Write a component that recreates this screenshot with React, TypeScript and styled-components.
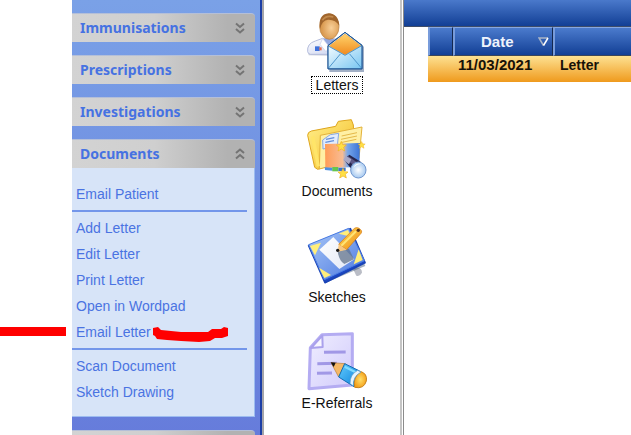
import React from "react";
import styled, { createGlobalStyle } from "styled-components";

const GlobalStyle = createGlobalStyle`
  * { box-sizing: border-box; }
  body {
    margin: 0;
    background: #fff;
    font-family: "Liberation Sans", Arial, sans-serif;
    font-size: 14px;
  }
  button { font: inherit; border: 0; background: none; padding: 0; cursor: pointer; }
`;

const Page = styled.div`
  display: grid;
  grid-template-columns: 72px 192px 140px minmax(0, 1fr);
  height: 100vh;
  overflow: hidden;
`;

const Gutter = styled.div``;

const Sidebar = styled.nav`
  display: flex;
  flex-direction: column;
  gap: 13px;
  min-height: 0;
  padding: 13px 6px 0 0;
  background: linear-gradient(#7aa1e7, #667cdb);
  border-right: 2px solid #a5a5a9;
  box-shadow: inset -2px 0 0 #1d3fa6;
`;

const Section = styled.section`
  flex: none;
  margin-right: 1px;
`;

const SectionHeader = styled.button`
  display: flex;
  align-items: center;
  justify-content: space-between;
  width: 100%;
  height: 29px;
  padding: 0 10px 0 8px;
  border-top: 1px solid #b4bfd8;
  border-radius: 0 4px 0 0;
  background: linear-gradient(90deg, #d3d3d3, #cfcfcf 45%, #b2b2b2 85%);
  color: #4672e2;
  font-family: "Noto Sans", sans-serif;
  font-size: 14px;
  font-weight: 700;
  line-height: 28px;
`;

const NextHeader = styled.div`
  flex: none;
  height: 29px;
  margin-right: 1px;
  border-top: 1px solid #b4bfd8;
  border-radius: 0 4px 0 0;
  background: linear-gradient(90deg, #d3d3d3, #cfcfcf 45%, #b2b2b2 85%);
`;

const Panel = styled.div`
  padding: 13px 0 11px;
  background: #d7e4f8;
  border-right: 1px solid #9dbcf0;
  border-bottom: 1px solid #9dbcf0;
`;

const PanelItem = styled.div`
  position: relative;
  display: flex;
  align-items: center;
  height: 26px;
  padding-left: 4px;
`;

const PanelLink = styled.a`
  color: #4a73e2;
  line-height: 26px;
  text-decoration: none;
`;

const Separator = styled.hr`
  height: 2px;
  margin: 3px 7px 3px 0;
  border: 0;
  background: #7396ea;
`;

const ArrowMark = styled.svg`
  position: absolute;
  left: -72px;
  top: 8px;
`;

const Underline = styled.svg`
  position: absolute;
  left: 81px;
  top: 8px;
`;

const IconBar = styled.div`
  display: flex;
  flex-direction: column;
  align-items: center;
  gap: 25px;
  padding: 13px 0 0 7px;
  border-right: 1px solid #8b8b8b;
  box-shadow: inset -1px 0 0 #fff, inset -3px 0 0 #c5c5c5;
`;

const IconButton = styled.button`
  display: flex;
  flex-direction: column;
  align-items: center;
  gap: 3px;
  color: #111;
`;

const IconLabel = styled.span<{ $focused?: boolean }>`
  height: 18px;
  padding: 0 4px;
  border: 1px dotted ${(p) => (p.$focused ? "#000" : "transparent")};
  line-height: 16px;
`;

const Content = styled.main`
  min-width: 0;
`;

const TitleBar = styled.div`
  height: 27px;
  background: linear-gradient(#4a79cb, #123f95);
  border-bottom: 1px solid #3f4d68;
`;

const TableWrap = styled.div`
  padding-left: 24px;
`;

const Table = styled.table`
  width: 100%;
  table-layout: fixed;
  border-collapse: separate;
  border-spacing: 0;
`;

const HeadCell = styled.th<{ $width?: number }>`
  width: ${(p) => (p.$width ? `${p.$width}px` : "auto")};
  height: 29px;
  padding: 0;
  border-top: 1px solid #87a8e2;
  border-left: 2px solid #789cdb;
  border-right: 1px solid #14284f;
  border-bottom: 1px solid #3c4658;
  background: linear-gradient(#4b7bcd, #123f95);
  color: #eef3fc;

  &:last-child { border-right: 0; }
`;

const SortButton = styled.button`
  display: flex;
  align-items: center;
  justify-content: space-between;
  width: 100%;
  padding: 0 3px 0 26px;
  color: inherit;
  font-size: 15px;
  font-weight: 700;
  line-height: 26px;
`;

const Row = styled.tr`
  background: linear-gradient(#fde192, #ef9a1d);
`;

const Cell = styled.td<{ $inset?: number; $size?: number }>`
  height: 26px;
  padding: 0 0 0 ${(p) => p.$inset ?? 0}px;
  color: #181208;
  font-size: ${(p) => p.$size ?? 14}px;
  font-weight: 700;
  line-height: 18px;
  vertical-align: top;
`;

function Chevrons({ up }: { up?: boolean }) {
  const d = up ? "M1 5 5 1.5 9 5M1 10.500 5 7 9 10.500" : "M1 1.500 5 5 9 1.500M1 7 5 10.500 9 7";
  return (
    <svg width="10" height="12" viewBox="0 0 10 12" fill="none" stroke="#747474" strokeWidth="2">
      <path d={d} />
    </svg>
  );
}

function LettersIcon() {
  return (
    <svg width="60" height="60" viewBox="51 24 180 180">
      <defs>
        <radialGradient id="face" cx=".6" cy=".55"><stop stopColor="#f8cf98" /><stop offset="1" stopColor="#d9994f" /></radialGradient>
        <linearGradient id="flap" x2="0" y2="1"><stop stopColor="#ffd36b" /><stop offset="1" stopColor="#f08a1e" /></linearGradient>
        <linearGradient id="mail" x2="1" y2="1"><stop stopColor="#f2fbff" /><stop offset="1" stopColor="#79c6f2" /></linearGradient>
        <linearGradient id="coat" x2="1" y2="1"><stop stopColor="#fff" /><stop offset="1" stopColor="#c6cfee" /></linearGradient>
      </defs>
      <path d="M54 148Q48 118 78 108L98 101 142 103 160 120V150Z" fill="#8995ac" opacity=".45" transform="translate(2 3)" />
      <path d="M53 140Q50 116 76 108L98 100 140 102Q160 108 164 145L112 148H62Q54 147 53 140Z" fill="url(#coat)" stroke="#b4bcdc" strokeWidth="3" />
      <path d="M100 101 120 134 139 103Z" fill="#93a8df" />
      <path d="m98 101-8 17 18 22 11-14ZM138 103l8 16-16 15-7-8Z" fill="#fff" stroke="#c1caea" strokeWidth="2" />
      <path d="M75 124h14v14H75z" fill="#3e70da" /><path d="M88 127h7v9h-7z" fill="#e36c4d" />
      <ellipse cx="118" cy="65" rx="29" ry="38" fill="url(#face)" stroke="#b47a3c" strokeWidth="2" />
      <path d="M90 72Q83 28 116 25Q145 26 148 62Q137 43 114 44Q96 45 90 72Z" fill="#a0652c" />
      <path d="M97 46Q108 30 130 36" fill="none" stroke="#c28a4c" strokeWidth="5" />
      <path d="M116 124 166 87 220 122V198H116Z" fill="#46618d" opacity=".5" transform="translate(2 3)" />
      <path d="M114 122 165 82 216 121V191H114Z" fill="url(#mail)" stroke="#285e9d" strokeWidth="3" />
      <path d="M118 123 165 87 212 122 165 150Z" fill="url(#flap)" stroke="#f5a23d" strokeWidth="2" />
      <path d="M115 124 165 151 215 123V190H115Z" fill="url(#mail)" />
      <path d="M115 190 151 147M215 190 179 147M115 123 165 151 215 122" fill="none" stroke="#4f96cc" strokeWidth="3" />
      <path d="M114 122 165 82 216 121V192H114Z" fill="none" stroke="#225996" strokeWidth="3" strokeLinejoin="round" />
    </svg>
  );
}

const STAR = "m0-15 4 10 11 1-8 7 3 11-10-6-10 6 3-11-8-7 11-1Z";

function DocumentsIcon() {
  return (
    <svg width="60" height="60" viewBox="51 27 180 180">
      <defs>
        <linearGradient id="fold" x2="1" y2="1"><stop stopColor="#fff08e" /><stop offset="1" stopColor="#f4b91e" /></linearGradient>
        <linearGradient id="pic" x2="1"><stop stopColor="#ff9c56" /><stop offset=".5" stopColor="#f8bc94" /><stop offset=".65" stopColor="#76a6ea" /><stop offset="1" stopColor="#3c73d5" /></linearGradient>
        <radialGradient id="lens"><stop stopColor="#fff" /><stop offset="1" stopColor="#a6c9f0" /></radialGradient>
      </defs>
      <path d="M53 76Q53 66 64 63L137 49 145 34 184 29 190 45 194 145 83 178 74 172Z" fill="url(#fold)" stroke="#dea51d" strokeWidth="3" />
      <path d="M91 76 216 51 207 145 88 177Z" fill="#fff0a5" stroke="#e4b23a" strokeWidth="3" />
      <path d="m98 90 23-16 25-4-4 37-43 10Z" fill="#e2ecfd" stroke="#87a8e2" strokeWidth="3" />
      <path d="m108 88 25-5M106 97l26-5" stroke="#618edb" strokeWidth="4" />
      <path d="m155 78 46-10M153 88l48-10M152 98l47-10" stroke="#e5b94a" strokeWidth="3" />
      <path d="M68 79 85 169" stroke="#ffe569" strokeWidth="10" />
      <path d="M105 102 210 99 208 171 106 174Z" fill="url(#pic)" />
      <path d="m104 172 24 1v9l-23-2Z" fill="#4b90e2" /><path d="M127 171h18v13h-18z" fill="#68c54c" /><path d="M145 173h22v10h-22z" fill="#4076c8" />
      <path d="m162 149 16-15 35 22-20 32Z" fill="#27264d" />
      <path d="m173 137 32 23-7 11-31-24Z" fill="#5c5786" />
      <path d="m160 150 7-13 17 11-7 15Z" fill="#aaa8c6" />
      <ellipse cx="205" cy="180" rx="23" ry="24" fill="url(#lens)" stroke="#7197cf" strokeWidth="3" />
      <path d="M190 173q9-17 25-11-16 1-25 11Z" fill="#fff" />
      <g fill="#ffe045" stroke="#efb120" strokeWidth="2">
        <path d={STAR} transform="translate(154 109)" />
        <path d={STAR} transform="translate(159 190)" />
        <path d={STAR} transform="translate(215 105) scale(.7)" />
      </g>
    </svg>
  );
}

function SketchesIcon() {
  return (
    <svg width="60" height="60" viewBox="51 30 180 180">
      <defs>
        <linearGradient id="board" x2="1" y2="1"><stop stopColor="#a9c8f8" /><stop offset="1" stopColor="#4b78df" /></linearGradient>
        <linearGradient id="pencil" x2="1" y2="1"><stop stopColor="#ffdc55" /><stop offset="1" stopColor="#ed8916" /></linearGradient>
        <linearGradient id="paper" x2="1" y2="1"><stop stopColor="#fff" /><stop offset="1" stopColor="#e2e8f6" /></linearGradient>
      </defs>
      <path d="M188 160q28-7 28 13-8 14-17 9Z" fill="#9ca1ae" opacity=".7" />
      <path d="M58 99 105 198 224 148 180 46Z" fill="#385276" opacity=".45" transform="translate(2 5)" />
      <path d="M56 92 181 41 225 143 105 203Z" fill="#1c48c5" stroke="#1a43b5" strokeWidth="5" strokeLinejoin="round" />
      <path d="M56 89 176 40 223 137 103 194Z" fill="url(#board)" stroke="#4b7de4" strokeWidth="3" />
      <path d="m60 93 33-10-18 38ZM146 56l28-11 9 20ZM206 103l12 32-27 13ZM87 158l36 22-20 9Z" fill="#ffee7b" />
      <path d="m88 104 42-38 63 67-45 29Z" fill="url(#paper)" />
      <path d="m143 109 34-8 15 32-29 14q-16-9-20-38Z" fill="#61738b" opacity=".75" />
      <path d="m146 88 47-48q12-7 22 8l-1 6-44 50Z" fill="url(#pencil)" stroke="#d47a12" strokeWidth="2" />
      <path d="m154 92 44-43" stroke="#ffe476" strokeWidth="6" />
      <path d="m146 88 24 16-27 6Z" fill="#f9c77f" />
      <circle cx="143" cy="106" r="5" fill="#17171a" /><circle cx="205" cy="46" r="5" fill="#55331e" />
    </svg>
  );
}

function ReferralsIcon() {
  return (
    <svg width="60" height="60" viewBox="51 33 180 180">
      <defs>
        <linearGradient id="sheet" x2="1" y2="1"><stop stopColor="#f0eeff" /><stop offset="1" stopColor="#d1cbfb" /></linearGradient>
        <linearGradient id="blue" x2="1" y2="1"><stop stopColor="#64ccff" /><stop offset="1" stopColor="#087fd9" /></linearGradient>
        <radialGradient id="end"><stop stopColor="#ffdf6b" /><stop offset="1" stopColor="#f4a21b" /></radialGradient>
      </defs>
      <path d="M96 44 187 41V195L57 206 61 83Z" fill="url(#sheet)" stroke="#b4acf2" strokeWidth="9" strokeLinejoin="round" />
      <path d="m63 84 34-37 1 34Z" fill="#f8f6ff" stroke="#aaa1ec" strokeWidth="6" strokeLinejoin="round" />
      <path d="m102 97 65-1M82 131l59-1M81 160l45-1" stroke="#a198e6" strokeWidth="9" />
      <path d="m123 128 43 3-20 40Z" fill="#f5b867" stroke="#b97c31" strokeWidth="2" />
      <path d="m122 127 15 1-6 13Z" fill="#111" />
      <path d="m164 131 45 22-17 47-46-29Z" fill="url(#blue)" stroke="#116db3" strokeWidth="3" />
      <path d="m164 140 39 20" stroke="#80dcff" strokeWidth="7" />
      <path d="M211 154q22 7 18 29-7 25-35 19-7-27 17-48Z" fill="url(#end)" stroke="#c68320" strokeWidth="3" />
      <path d="M203 151q-24 13-23 40l10 7q-2-28 23-42Z" fill="#e8f4fd" stroke="#4c94c6" strokeWidth="2" />
    </svg>
  );
}

const closedSections = ["Immunisations", "Prescriptions", "Investigations"];

const launchers = [
  { label: "Letters", Icon: LettersIcon },
  { label: "Documents", Icon: DocumentsIcon },
  { label: "Sketches", Icon: SketchesIcon },
  { label: "E-Referrals", Icon: ReferralsIcon },
];

function Item({ label, children }: { label: string; children?: React.ReactNode }) {
  return (
    <PanelItem>
      <PanelLink href="#">{label}</PanelLink>
      {children}
    </PanelItem>
  );
}

export default function App() {
  return (
    <>
      <GlobalStyle />
      <Page>
        <Gutter />
        <Sidebar>
          {closedSections.map((name) => (
            <Section key={name}>
              <SectionHeader aria-expanded={false}>
                {name}
                <Chevrons />
              </SectionHeader>
            </Section>
          ))}
          <Section>
            <SectionHeader aria-expanded>
              Documents
              <Chevrons up />
            </SectionHeader>
            <Panel>
              <Item label="Email Patient" />
              <Separator />
              <Item label="Add Letter" />
              <Item label="Edit Letter" />
              <Item label="Print Letter" />
              <Item label="Open in Wordpad" />
              <Item label="Email Letter">
                <ArrowMark width="66" height="10" viewBox="0 0 66 10">
                  <path d="M0 0h66v9H0z" fill="#f00" />
                </ArrowMark>
                <Underline width="76" height="16" viewBox="0 0 76 16">
                  <path d="M0 1 5 0 8 3 28 5 55 5 59 2 68 2 71 0 75 1V9L69 11 62 11 57 14 46 15 28 14 14 13 4 12 2 9 0 8Z" fill="#f00" />
                </Underline>
              </Item>
              <Separator />
              <Item label="Scan Document" />
              <Item label="Sketch Drawing" />
            </Panel>
          </Section>
          <NextHeader />
        </Sidebar>
        <IconBar>
          {launchers.map(({ label, Icon }, i) => (
            <IconButton key={label}>
              <Icon />
              <IconLabel $focused={i === 0}>{label}</IconLabel>
            </IconButton>
          ))}
        </IconBar>
        <Content>
          <TitleBar />
          <TableWrap>
            <Table>
              <thead>
                <tr>
                  <HeadCell $width={25} />
                  <HeadCell $width={100} aria-sort="descending">
                    <SortButton>
                      Date
                      <svg width="11" height="10" viewBox="0 0 11 10" fill="none">
                        <path d="M10 1H1L5.500 8.500" stroke="#a9b4c6" strokeWidth="1.500" />
                        <path d="M10 1 5.500 8.500" stroke="#fff" strokeWidth="1.500" />
                      </svg>
                    </SortButton>
                  </HeadCell>
                  <HeadCell />
                </tr>
              </thead>
              <tbody>
                <Row>
                  <Cell />
                  <Cell $inset={5} $size={15}>11/03/2021</Cell>
                  <Cell $inset={7}>Letter</Cell>
                </Row>
              </tbody>
            </Table>
          </TableWrap>
        </Content>
      </Page>
    </>
  );
}
